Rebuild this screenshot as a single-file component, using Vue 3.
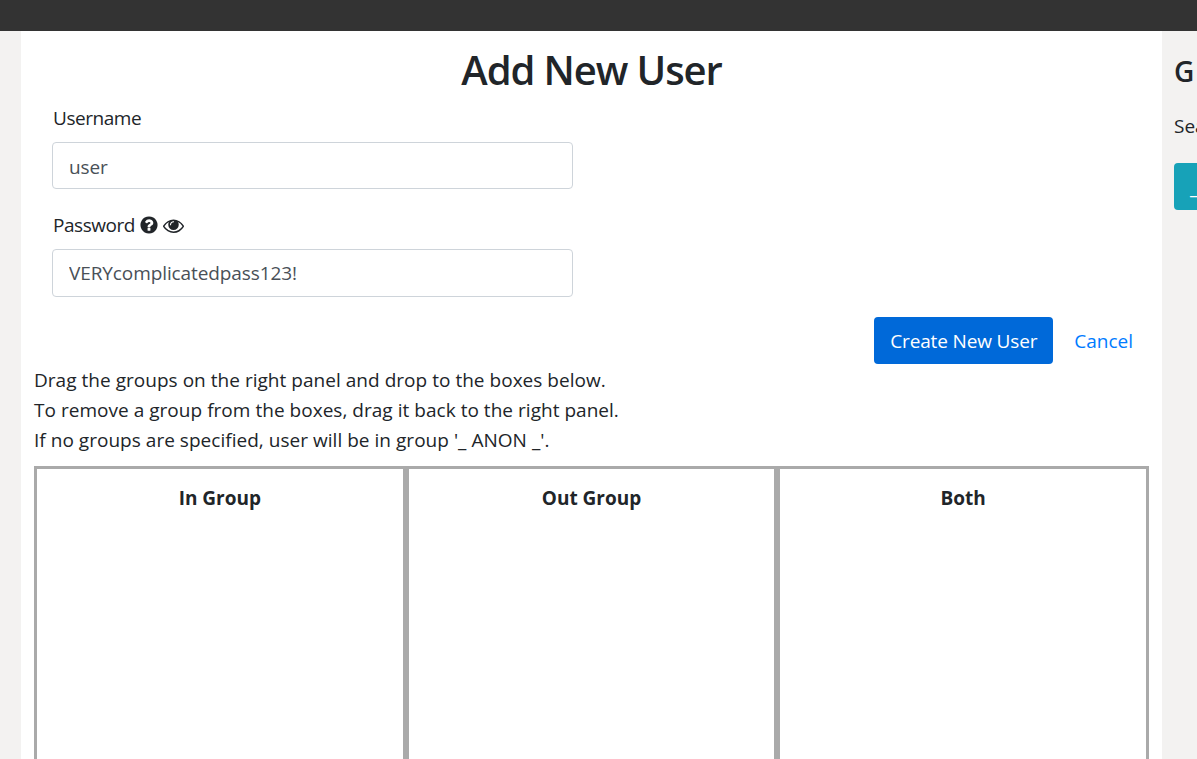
<script setup>
const columns = ["In Group", "Out Group", "Both"];
const notes = [
  "Drag the groups on the right panel and drop to the boxes below.",
  "To remove a group from the boxes, drag it back to the right panel.",
  "If no groups are specified, user will be in group '_ ANON _'.",
];
</script>

<template>
  <div class="page">
    <div class="topbar"></div>
    <div class="content">
      <main class="main">
        <h1 class="title">Add New User</h1>
        <form class="form" @submit.prevent>
          <div class="field">
            <label class="label">Username</label>
            <input class="input" value="user" />
          </div>
          <div class="field">
            <label class="label">
              Password
              <svg class="icon" viewBox="0 0 1792 1792" width="20" height="20">
                <path fill="currentColor" d="M1024 1376v-192q0-14-9-23t-23-9h-192q-14 0-23 9t-9 23v192q0 14 9 23t23 9h192q14 0 23-9t9-23zm256-672q0-88-55.500-163t-138.500-116-170-41q-243 0-371 213-15 24 8 42l132 100q7 6 19 6 16 0 25-12 53-68 86-92 34-24 86-24 48 0 85.500 26t37.500 59q0 38-20 61t-68 45q-63 28-115.500 86.500t-52.500 125.500v36q0 14 9 23t23 9h192q14 0 23-9t9-23q0-19 21.500-49.500t54.500-49.500q32-18 49-28.500t46-35 44.500-48 28-60.500 12.500-81zm384 192q0 209-103 385.500t-279.500 279.500-385.500 103-385.500-103-279.500-279.500-103-385.500 103-385.500 279.500-279.500 385.500-103 385.500 103 279.500 279.500 103 385.500z" />
              </svg>
              <svg class="icon" viewBox="0 0 1792 1792" width="21" height="21">
                <path fill="currentColor" d="M1664 960q-152-236-381-354 61 104 61 226 0 185-131.500 316.500t-316.500 131.500-316.500-131.500-131.500-316.500q0-122 61-226-229 118-381 354 133 205 333.500 326.500t434.500 121.500 434.500-121.500 333.500-326.500zm-720-384q0-20-14-34t-34-14q-125 0-214.500 89.500t-89.500 214.500q0 20 14 34t34 14 34-14 14-34q0-86 61-147t147-61q20 0 34-14t14-34zm848 384q0 34-20 69-140 230-376.500 368.500t-499.500 138.500-499.500-139-376.500-368q-20-35-20-69t20-69q140-229 376.500-368t499.500-139 499.500 139 376.500 368q20 35 20 69z" />
              </svg>
            </label>
            <input class="input" value="VERYcomplicatedpass123!" />
          </div>
          <div class="actions">
            <button class="btn-primary" type="button">Create New User</button>
            <a class="cancel" href="#">Cancel</a>
          </div>
        </form>
        <p class="note first">{{ notes[0] }}</p>
        <p class="note">{{ notes[1] }}</p>
        <p class="note">{{ notes[2] }}</p>
        <div class="boxes">
          <div v-for="c in columns" :key="c" class="box">
            <h6 class="box-title">{{ c }}</h6>
          </div>
        </div>
      </main>
      <aside class="side">
        <h4 class="side-title">Groups</h4>
        <p class="side-text">Search groups</p>
        <button class="btn-info" type="button">_ ANON _</button>
      </aside>
    </div>
  </div>
</template>

<style>
html, body { margin: 0; height: 100%; overflow: hidden; background: #f3f2f1; }
</style>

<style scoped>
.page { height: 759px; overflow: hidden; font-family: "Open Sans", "Noto Sans", sans-serif; font-size: 19px; color: #212529; }
.topbar { height: 31px; background: #333; }
.content { display: flex; padding-left: 21px; }
.main { flex: none; width: 1141px; height: 728px; background: #fff; padding: 0 13px; box-sizing: border-box; }
.title { margin: 0; padding-top: 15px; height: 63px; box-sizing: border-box; text-align: center; font-size: 40px; line-height: 48px; font-weight: 600; letter-spacing: -1.1px; }
.form { padding: 12px 0 0 18px; }
.field { width: 521px; }
.field + .field { margin-top: 24px; }
.label { display: flex; align-items: center; height: 24px; margin-bottom: 12px; padding-left: 1px; letter-spacing: -0.45px; }
.icon { flex: none; margin-left: 4px; }
.input { display: block; width: 100%; height: 48px; box-sizing: border-box; padding: 0 16px; border: 1px solid #ced4da; border-radius: 4px; font: inherit; letter-spacing: -0.1px; color: #495057; outline: none; }
.field:first-child .input { height: 47px; padding-top: 2px; }
.actions { display: flex; justify-content: flex-end; align-items: center; height: 47px; margin-top: 20px; }
.btn-primary { height: 47px; width: 179px; padding: 0; border: none; border-radius: 4px; background: #0069d9; color: #fff; font: inherit; letter-spacing: -0.15px; }
.cancel { margin-left: 5px; padding: 0 16px; color: #007bff; text-decoration: none; }
.note { margin: 0; line-height: 30px; letter-spacing: 0.03px; }
.note.first { margin-top: 1px; }
.boxes { display: grid; grid-template-columns: repeat(3, 1fr); width: 1115px; margin-top: 11px; height: 400px; }
.box { border: 3px solid #aaa; }
.box-title { margin: 0; padding-top: 17px; text-align: center; font-size: 19px; line-height: 24px; font-weight: 700; }
.side { flex: 1; min-width: 0; padding: 23px 0 0 12px; overflow: hidden; white-space: nowrap; }
.side-title { margin: 0; font-size: 28px; line-height: 34px; font-weight: 600; letter-spacing: 2.5px; }
.side-text { margin: 26px 0 0; line-height: 24px; }
.btn-info { display: block; margin-top: 25px; height: 47px; padding: 0 16px; border: none; border-radius: 4px; background: #17a2b8; color: #fff; font: inherit; }
</style>
